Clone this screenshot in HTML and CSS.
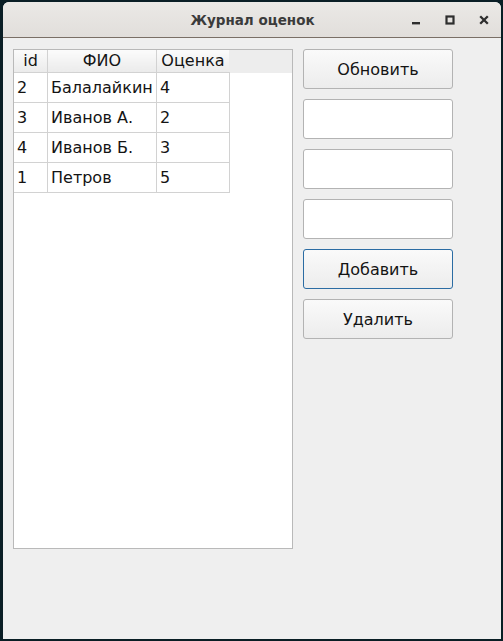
FILE: index.html
```
<!DOCTYPE html>
<html lang="ru">
<head>
<meta charset="utf-8">
<title>Журнал оценок</title>
<link rel="stylesheet" href="styles.css">
</head>
<body>
<div class="window">
  <div class="titlebar">
    <div class="title">Журнал оценок</div>
    <div class="controls">
      <svg class="ctl" width="10" height="10" viewBox="0 0 10 10"><rect x="1" y="7" width="8" height="2.4" fill="#2e2e2e"/></svg>
      <svg class="ctl" width="10" height="10" viewBox="0 0 10 10"><rect x="1.5" y="1.5" width="7" height="7" fill="none" stroke="#2e2e2e" stroke-width="2.2"/></svg>
      <svg class="ctl" width="10" height="10" viewBox="0 0 10 10"><path d="M1.2 1.2 L8.8 8.8 M8.8 1.2 L1.2 8.8" stroke="#2e2e2e" stroke-width="2.3"/></svg>
    </div>
  </div>
  <div class="content">
    <div class="tablebox">
      <div class="headstrip">
        <table class="grid">
          <thead>
            <tr><th class="c1">id</th><th class="c2">ФИО</th><th class="c3">Оценка</th></tr>
          </thead>
          <tbody>
            <tr><td>2</td><td>Балалайкин</td><td>4</td></tr>
            <tr><td>3</td><td>Иванов А.</td><td>2</td></tr>
            <tr><td>4</td><td>Иванов Б.</td><td>3</td></tr>
            <tr><td>1</td><td>Петров</td><td>5</td></tr>
          </tbody>
        </table>
      </div>
    </div>
    <div class="side">
      <button class="btn">Обновить</button>
      <input class="field" type="text">
      <input class="field" type="text">
      <input class="field" type="text">
      <button class="btn focused">Добавить</button>
      <button class="btn">Удалить</button>
    </div>
  </div>
</div>
</body>
</html>
```
FILE: styles.css
```
html, body {
  margin: 0;
  padding: 0;
}
body {
  background: #0a1e25;
  width: 503px;
  height: 641px;
  overflow: hidden;
  font-family: "DejaVu Sans", "Liberation Sans", sans-serif;
}
.window {
  margin: 2px 0 0 3px;
  width: 498px;
  height: 637px;
  background: #efefef;
  border-radius: 6px 6px 0 0;
  display: flex;
  flex-direction: column;
  overflow: hidden;
}
.titlebar {
  height: 35px;
  flex: none;
  background: linear-gradient(#ebe9e6, #e1dedb);
  border-bottom: 1px solid #7a6f66;
  display: flex;
  align-items: center;
  justify-content: center;
  position: relative;
}
.title {
  font-weight: bold;
  font-size: 13.5px;
  color: #3b3b3b;
  margin-left: 1px;
}
.controls {
  position: absolute;
  right: 12px;
  top: 13px;
  display: flex;
  gap: 24px;
}
.ctl {
  display: block;
}
.content {
  display: flex;
  gap: 10px;
  padding: 11px 10px 0 10px;
  align-items: flex-start;
}
.tablebox {
  width: 278px;
  height: 498px;
  border: 1px solid #b9b9b9;
  background: #ffffff;
}
.headstrip {
  background: linear-gradient(#ededed, #ededed) top left / 100% 23px no-repeat;
}
.grid {
  border-collapse: collapse;
  font-size: 16px;
  color: #141414;
}
.grid th {
  height: 22px;
  padding: 0;
  font-weight: normal;
  background: linear-gradient(#fbfbfb, #ebebeb);
  border-right: 1px solid #d2d2d2;
  border-bottom: 1px solid #d2d2d2;
  text-align: center;
  line-height: 22px;
}
.grid th.c3 {
  border-right: none;
}
.grid th.c1 { width: 33px; }
.grid th.c2 { width: 108px; }
.grid th.c3 { width: 72px; }
.grid td {
  height: 29px;
  padding: 0 0 0 3px;
  border: 1px solid #d2d2d2;
  border-top: none;
  text-align: left;
  white-space: nowrap;
}
.grid td:first-child {
  border-left: none;
}
.side {
  display: flex;
  flex-direction: column;
  gap: 10px;
}
.btn, .field {
  box-sizing: border-box;
  width: 150px;
  height: 40px;
  margin: 0;
  border: 1px solid #b3b3b3;
  border-radius: 3px;
  font-family: "DejaVu Sans", "Liberation Sans", sans-serif;
  font-size: 16px;
  color: #141414;
}
.btn {
  background: linear-gradient(#fafafa, #ececec);
  padding: 0;
}
.btn.focused {
  border-color: #2b6ca3;
}
.field {
  background: #ffffff;
  padding: 0 4px;
}
```
